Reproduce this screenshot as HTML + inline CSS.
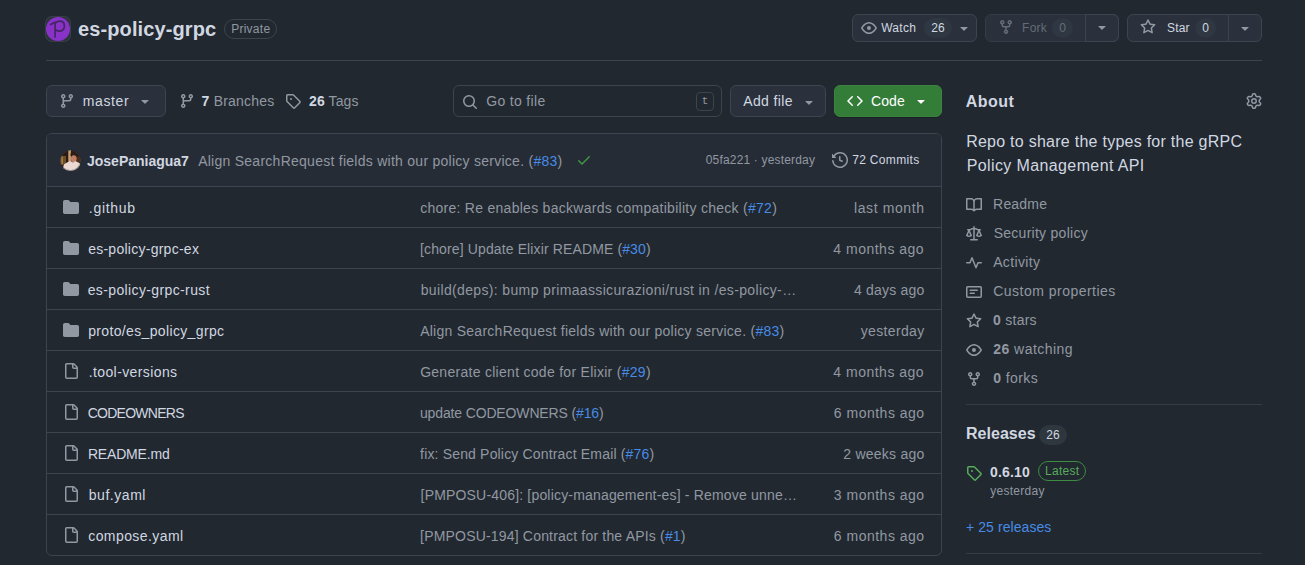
<!DOCTYPE html>
<html lang="en">
<head>
<meta charset="utf-8">
<title>es-policy-grpc</title>
<style>
*{box-sizing:border-box}
html,body{margin:0;padding:0}
body{width:1305px;height:565px;overflow:hidden;background:#212830;color:#d1d7e0;font-family:"Liberation Sans", sans-serif;font-size:14px;line-height:21px;position:relative}
svg{display:block;fill:currentColor;flex:none}
a{color:inherit;text-decoration:none}
.t{white-space:nowrap;display:inline-block}
.abs{position:absolute}
.muted{color:#9198a1}
.link{color:#478be6}
b,.b{font-weight:700}

/* header */
#avatar{left:46px;top:17px;width:24px;height:24px;border-radius:6px;background:#2d333b;box-shadow:0 0 0 1px #373e47;overflow:hidden}
#title{left:78px;top:14px;font-size:20px;line-height:30px;font-weight:700;color:#d1d7e0}
#private{left:224px;top:19px;height:20px;border:1px solid #3d444d;border-radius:10px;padding:0 6px;font-size:12px;line-height:18px;font-weight:400;color:#9198a1}
#hline{left:46px;top:60px;width:1216px;height:1px;background:#3d444d}

.btn{position:absolute;display:flex;align-items:center;background:#2a313c;border:1px solid #3d444d;border-radius:6px;color:#d1d7e0;font-weight:400}
.btn.sm{height:28px;top:14px;font-size:12px;line-height:20px}
.btn.md{height:32px;top:85px;font-size:14px;line-height:20px}
.btn.dis{background:#2a313c;border-color:#343b45;color:#656c76}
.counter{display:inline-block;min-width:20px;height:20px;padding:0 6px;border-radius:10px;background:#656c7633;font-size:12px;line-height:20px;font-weight:400;text-align:center;color:#d1d7e0}
.btn .counter{background:#2f3742}
.btn.dis .counter{color:#656c76;background:#2f3742}
.sep{position:absolute;top:0;bottom:0;width:1px;background:#3d444d}

.kbd{width:18px;height:19px;border:1px solid #3d444d;border-radius:4px;font-family:"Liberation Mono", monospace;font-size:11px;line-height:16px;text-align:center;color:#9198a1}
/* table */
#table{left:46px;top:133px;width:896px;border:1px solid #3d444d;border-radius:6px;overflow:hidden}
#thead{height:52px;background:#262c36;position:relative}
.row{height:41px;border-top:1px solid #3d444d;position:relative}
.row .ic{position:absolute;left:16px;top:12px;color:#9198a1}
.row .nm{position:absolute;left:41px;top:11px;line-height:20px;color:#d1d7e0}
.row .msg{position:absolute;left:373px;top:11px;line-height:20px;color:#9198a1}
.row .dt{position:absolute;right:16.6px;top:11px;line-height:20px;color:#9198a1}

/* sidebar */
.side{position:absolute;left:966px}
.srow{position:absolute;left:966px;display:flex;align-items:center;color:#9198a1;line-height:21px}
.srow svg{margin-right:11px;align-self:flex-start;margin-top:4px}
.srow b{color:inherit}
</style>
</head>
<body>

<!-- repo header -->
<div id="avatar" class="abs"><svg width="24" height="24" viewBox="0 0 24 24"><circle cx="12" cy="12" r="12" fill="#8832c8"/><path d="M4.6 7.6 9.1 5.200V20M9.100 6.400C10.200 4.800 12.200 3.900 14.200 4.100c2.800.300 4.300 2.500 4.200 5.100-.100 3-2.200 5.100-5 5-1.600-.100-3.200-.600-4.300-1.400" fill="none" stroke="#452662" stroke-width="1.700" stroke-linecap="round" stroke-linejoin="round"/></svg></div>
<div id="title" class="abs t" style="letter-spacing:0.103px;margin-left:0.05px;margin-right:-0.05px">es-policy-grpc</div>
<div id="private" class="abs t" style="letter-spacing:0.270px;margin-left:0.14px;margin-right:-0.14px">Private</div>
<div id="hline" class="abs"></div>

<!-- watch / fork / star -->
<div class="btn sm" style="left:852px;width:125px">
  <svg class="abs" style="left:8px;top:5px;color:#9198a1" width="16" height="16" viewBox="0 0 16 16"><path d="M8 2c1.981 0 3.671.992 4.933 2.078 1.27 1.091 2.187 2.345 2.637 3.023a1.62 1.62 0 0 1 0 1.798c-.45.678-1.367 1.932-2.637 3.023C11.67 13.008 9.981 14 8 14c-1.981 0-3.671-.992-4.933-2.078C1.797 10.830.880 9.576.430 8.898a1.620 1.620 0 0 1 0-1.798c.450-.677 1.367-1.931 2.637-3.022C4.330 2.992 6.019 2 8 2ZM1.679 7.932a.120.120 0 0 0 0 .136c.411.622 1.241 1.750 2.366 2.717C5.176 11.758 6.527 12.500 8 12.500c1.473 0 2.825-.742 3.955-1.715 1.124-.967 1.954-2.096 2.366-2.717a.120.120 0 0 0 0-.136c-.412-.621-1.242-1.750-2.366-2.717C10.824 4.242 9.473 3.500 8 3.500c-1.473 0-2.825.742-3.955 1.715-1.124.967-1.954 2.096-2.366 2.717ZM8 10a2 2 0 1 1-.001-3.999A2 2 0 0 1 8 10Z"/></svg>
  <span class="t abs" style="letter-spacing:0.322px;margin-left:0.16px;margin-right:-0.16px;left:28px;top:3px">Watch</span>
  <span class="counter abs" style="left:71px;top:3px;width:28px"><span class="t" style="letter-spacing:0.188px;margin-left:0.09px;margin-right:-0.09px">26</span></span>
  <svg class="abs" style="left:103px;top:5px;color:#9198a1" width="16" height="16" viewBox="0 0 16 16"><path d="m4.427 7.427 3.396 3.396a.25.25 0 0 0 .354 0l3.396-3.396A.25.25 0 0 0 11.396 7H4.604a.25.25 0 0 0-.177.427Z"/></svg>
</div>

<div class="btn sm dis" style="left:985px;width:134px">
  <svg class="abs" style="left:12px;top:4px" width="16" height="16" viewBox="0 0 16 16"><path d="M5 5.372v.878c0 .414.336.75.75.75h4.5a.75.75 0 0 0 .75-.75v-.878a2.25 2.25 0 1 1 1.5 0v.878a2.25 2.25 0 0 1-2.25 2.25h-1.5v2.128a2.251 2.251 0 1 1-1.5 0V8.5h-1.5A2.25 2.25 0 0 1 3.5 6.25v-.878a2.25 2.25 0 1 1 1.5 0ZM5 3.25a.75.75 0 1 0-1.5 0 .75.75 0 0 0 1.5 0Zm6.75.75a.75.75 0 1 0 0-1.5.75.75 0 0 0 0 1.500Zm-3 8.750a.750.750 0 1 0-1.500 0 .750.750 0 0 0 1.500 0Z"/></svg>
  <span class="t abs" style="letter-spacing:0.215px;margin-left:0.11px;margin-right:-0.11px;left:36px;top:3px">Fork</span>
  <span class="counter abs" style="left:66px;top:3px;width:21px"><span class="t" style="letter-spacing:0.188px;margin-left:0.09px;margin-right:-0.09px">0</span></span>
  <div class="abs" style="left:99px;top:-1px;bottom:-1px;right:-1px;border:1px solid #3d444d;border-radius:0 6px 6px 0"></div>
  <svg class="abs" style="left:108px;top:4px;color:#9198a1" width="16" height="16" viewBox="0 0 16 16"><path d="m4.427 7.427 3.396 3.396a.25.25 0 0 0 .354 0l3.396-3.396A.25.25 0 0 0 11.396 7H4.604a.25.25 0 0 0-.177.427Z"/></svg>
</div>

<div class="btn sm" style="left:1127px;width:135px">
  <svg class="abs" style="left:12.3px;top:4px;color:#9198a1" width="16" height="16" viewBox="0 0 16 16"><path d="M8 .25a.75.75 0 0 1 .673.418l1.882 3.815 4.21.612a.75.75 0 0 1 .416 1.279l-3.046 2.97.719 4.192a.751.751 0 0 1-1.088.791L8 12.347l-3.766 1.98a.75.75 0 0 1-1.088-.79l.72-4.194L.818 6.374a.75.75 0 0 1 .416-1.28l4.21-.611L7.327.668A.75.75 0 0 1 8 .25Zm0 2.445L6.615 5.5a.75.75 0 0 1-.564.41l-3.097.45 2.24 2.184a.75.75 0 0 1 .216.664l-.528 3.084 2.769-1.456a.75.75 0 0 1 .698 0l2.77 1.456-.53-3.084a.75.75 0 0 1 .216-.664l2.24-2.183-3.096-.45a.75.75 0 0 1-.564-.41L8 2.694Z"/></svg>
  <span class="t abs" style="letter-spacing:0.148px;margin-left:0.07px;margin-right:-0.07px;left:39px;top:3px">Star</span>
  <span class="counter abs" style="left:67px;top:3px;width:21px"><span class="t" style="letter-spacing:0.188px;margin-left:0.09px;margin-right:-0.09px">0</span></span>
  <div class="sep" style="left:100px"></div>
  <svg class="abs" style="left:109px;top:5px;color:#9198a1" width="16" height="16" viewBox="0 0 16 16"><path d="m4.427 7.427 3.396 3.396a.25.25 0 0 0 .354 0l3.396-3.396A.25.25 0 0 0 11.396 7H4.604a.25.25 0 0 0-.177.427Z"/></svg>
</div>

<!-- toolbar -->
<div class="btn md" style="left:46px;width:120px">
  <svg class="abs" style="left:12.2px;top:7px;color:#9198a1" width="16" height="16" viewBox="0 0 16 16"><path d="M9.5 3.25a2.25 2.25 0 1 1 3 2.122V6A2.5 2.5 0 0 1 10 8.5H6a1 1 0 0 0-1 1v1.128a2.251 2.251 0 1 1-1.5 0V5.372a2.25 2.25 0 1 1 1.5 0v1.836A2.493 2.493 0 0 1 6 7h4a1 1 0 0 0 1-1v-.628A2.25 2.25 0 0 1 9.5 3.25Zm-6 0a.75.75 0 1 0 1.5 0 .75.75 0 0 0-1.5 0Zm8.25-.75a.75.75 0 1 0 0 1.5.75.75 0 0 0 0-1.5ZM4.25 12a.75.75 0 1 0 0 1.5.75.75 0 0 0 0-1.5Z"/></svg>
  <span class="t abs" style="letter-spacing:0.599px;margin-left:0.30px;margin-right:-0.30px;left:35.5px;top:5px;font-weight:400">master</span>
  <svg class="abs" style="left:90px;top:7px;color:#9198a1" width="16" height="16" viewBox="0 0 16 16"><path d="m4.427 7.427 3.396 3.396a.25.25 0 0 0 .354 0l3.396-3.396A.25.25 0 0 0 11.396 7H4.604a.25.25 0 0 0-.177.427Z"/></svg>
</div>

<svg class="abs" style="left:179px;top:93px;color:#9198a1" width="16" height="16" viewBox="0 0 16 16"><path d="M9.5 3.25a2.25 2.25 0 1 1 3 2.122V6A2.5 2.5 0 0 1 10 8.5H6a1 1 0 0 0-1 1v1.128a2.251 2.251 0 1 1-1.5 0V5.372a2.25 2.25 0 1 1 1.5 0v1.836A2.493 2.493 0 0 1 6 7h4a1 1 0 0 0 1-1v-.628A2.25 2.25 0 0 1 9.5 3.25Zm-6 0a.75.75 0 1 0 1.5 0 .75.75 0 0 0-1.5 0Zm8.25-.75a.75.75 0 1 0 0 1.5.75.75 0 0 0 0-1.5ZM4.25 12a.75.75 0 1 0 0 1.5.75.75 0 0 0 0-1.5Z"/></svg>
<span class="t abs muted" style="letter-spacing:0.191px;margin-left:-0.40px;margin-right:0.40px;margin-top:1px;left:202px;top:90px"><b style="color:#d1d7e0">7</b> Branches</span>
<svg class="abs" style="left:285px;top:93px;color:#9198a1" width="16" height="16" viewBox="0 0 16 16"><path d="M1 7.775V2.75C1 1.784 1.784 1 2.75 1h5.025c.464 0 .91.184 1.238.513l6.25 6.25a1.75 1.75 0 0 1 0 2.474l-5.026 5.026a1.75 1.75 0 0 1-2.474 0l-6.25-6.25A1.752 1.752 0 0 1 1 7.775Zm1.5 0c0 .066.026.13.073.177l6.25 6.25a.25.25 0 0 0 .354 0l5.025-5.025a.25.25 0 0 0 0-.354l-6.25-6.25a.25.25 0 0 0-.177-.073H2.75a.25.25 0 0 0-.25.25ZM6 5a1 1 0 1 1 0 2 1 1 0 0 1 0-2Z"/></svg>
<span class="t abs muted" style="letter-spacing:0.103px;margin-left:0.05px;margin-right:-0.05px;margin-top:1px;left:309px;top:90px"><b style="color:#d1d7e0">26</b> Tags</span>

<div class="abs" style="left:453px;top:85px;width:269px;height:32px;border:1px solid #3d444d;border-radius:6px;background:#212830">
  <svg class="abs" style="left:8px;top:8px;color:#9198a1" width="16" height="16" viewBox="0 0 16 16"><path d="M10.68 11.74a6 6 0 0 1-7.922-8.982 6 6 0 0 1 8.982 7.922l3.04 3.04a.749.749 0 0 1-.326 1.275.749.749 0 0 1-.734-.215ZM11.5 7a4.499 4.499 0 1 0-8.997 0A4.499 4.499 0 0 0 11.500 7Z"/></svg>
  <span class="t abs muted" style="letter-spacing:0.338px;margin-left:0.17px;margin-right:-0.17px;margin-top:1px;left:32px;top:4px">Go to file</span>
  <span class="abs kbd" style="left:242px;top:6px">t</span>
</div>

<div class="btn md" style="left:730px;width:96px">
  <span class="t abs" style="letter-spacing:0.381px;margin-left:0.19px;margin-right:-0.19px;left:12px;top:5px">Add file</span>
  <svg class="abs" style="left:70px;top:8px;color:#9198a1" width="16" height="16" viewBox="0 0 16 16"><path d="m4.427 7.427 3.396 3.396a.25.25 0 0 0 .354 0l3.396-3.396A.25.25 0 0 0 11.396 7H4.604a.25.25 0 0 0-.177.427Z"/></svg>
</div>

<div class="btn md" style="left:834px;width:108px;background:#347d39;border-color:#3a843f;box-shadow:0 1px 0 rgba(20,24,30,.55);color:#fff">
  <svg class="abs" style="left:12px;top:7px" width="16" height="16" viewBox="0 0 16 16"><path d="m11.28 3.22 4.25 4.25a.75.75 0 0 1 0 1.06l-4.25 4.25a.749.749 0 0 1-1.275-.326.749.749 0 0 1 .215-.734L13.94 8l-3.72-3.72a.749.749 0 0 1 .326-1.275.749.749 0 0 1 .734.215Zm-6.56 0a.751.751 0 0 1 1.042.018.751.751 0 0 1 .018 1.042L2.06 8l3.72 3.72a.749.749 0 0 1-.326 1.275.749.749 0 0 1-.734-.215L.47 8.53a.75.75 0 0 1 0-1.06Z"/></svg>
  <span class="t abs" style="letter-spacing:0.090px;margin-left:0.04px;margin-right:-0.04px;left:36px;top:5px">Code</span>
  <svg class="abs" style="left:78px;top:7px" width="16" height="16" viewBox="0 0 16 16"><path d="m4.427 7.427 3.396 3.396a.25.25 0 0 0 .354 0l3.396-3.396A.25.25 0 0 0 11.396 7H4.604a.25.25 0 0 0-.177.427Z"/></svg>
</div>

<!-- file table -->
<div id="table" class="abs">
  <div id="thead">
    <div class="abs" style="left:12.600px;top:16px;width:21px;height:21px;border-radius:50%;overflow:hidden;background:#2a1b13"><svg width="21" height="21" viewBox="-0.500 -0.500 21 21"><g style="filter:blur(.7px)"><rect x="-1" y="5.500" width="6.500" height="8.500" fill="#6e4c28"/><rect x="1" y="6" width="1.200" height="8" fill="#b8904a"/><rect x="7.800" y="-2" width="2.600" height="13" fill="#c9a274"/><rect x="16.500" y="6" width="5" height="6" fill="#4a2e1a"/><ellipse cx="13.600" cy="4" rx="3.600" ry="2.900" fill="#2c1e17"/><ellipse cx="13.300" cy="8.200" rx="2.900" ry="3.500" fill="#c07f66"/><path d="M2.500 21 4 14.500 9.500 11.200 12.500 13 15 11.400 19 13.500 20.500 21Z" fill="#ecd9d2" stroke="#ecd9d2" stroke-width="1.500" stroke-linejoin="round"/></g><circle cx="10" cy="10" r="10.100" fill="none" stroke="#444c56" stroke-opacity=".7" stroke-width=".8"/></svg></div>
    <span class="t abs b" style="letter-spacing:-0.005px;margin-left:-1.00px;margin-right:1.00px;left:41px;top:17px;line-height:20px">JosePaniagua7</span>
    <span class="t abs muted" style="letter-spacing:0.262px;margin-left:0.13px;margin-right:-0.13px;left:151px;top:17px;line-height:20px">Align SearchRequest fields with our policy service. (<span class="link">#83</span>)</span>
    <svg class="abs" style="left:529px;top:18px;color:#3f9645" width="16" height="16" viewBox="0 0 16 16"><path d="M13.78 4.22a.75.75 0 0 1 0 1.06l-7.25 7.25a.75.75 0 0 1-1.06 0L2.22 9.28a.751.751 0 0 1 .018-1.042.751.751 0 0 1 1.042-.018L6 10.94l6.72-6.72a.75.75 0 0 1 1.06 0Z"/></svg>
    <span class="t abs muted" style="letter-spacing:0.171px;margin-left:0.09px;margin-right:-0.09px;right:126px;top:16px;font-size:12px;line-height:20px">05fa221 · yesterday</span>
    <svg class="abs" style="left:785px;top:18px;color:#9198a1" width="16" height="16" viewBox="0 0 16 16"><path d="m.427 1.927 1.215 1.215a8.002 8.002 0 1 1-1.6 5.685.75.75 0 1 1 1.493-.154 6.5 6.5 0 1 0 1.18-4.458l1.358 1.358A.25.25 0 0 1 3.896 6H.25A.25.25 0 0 1 0 5.75V2.104a.25.25 0 0 1 .427-.177ZM7.75 4a.75.75 0 0 1 .75.75v2.992l2.028.812a.75.75 0 0 1-.557 1.392l-2.5-1A.751.751 0 0 1 7 8.25v-3.5A.75.75 0 0 1 7.75 4Z"/></svg>
    <span class="t abs" style="letter-spacing:0.330px;margin-left:0.16px;margin-right:-0.16px;left:805px;top:16px;font-size:12px;line-height:20px;font-weight:400">72 Commits</span>
  </div>
  <div class="row"><svg class="ic" width="16" height="16" viewBox="0 0 16 16"><path d="M1.75 1A1.75 1.75 0 0 0 0 2.75v10.5C0 14.216.784 15 1.75 15h12.5A1.75 1.75 0 0 0 16 13.25v-8.5A1.75 1.75 0 0 0 14.25 3H7.5a.25.25 0 0 1-.2-.1l-.9-1.2C6.07 1.26 5.55 1 5 1H1.750Z"/></svg><span class="t nm" style="letter-spacing:0.701px;margin-left:0.85px;margin-right:-0.85px">.github</span><span class="t msg" style="letter-spacing:0.275px;margin-left:0.14px;margin-right:-0.14px">chore: Re enables backwards compatibility check (<span class="link">#72</span>)</span><span class="t dt" style="letter-spacing:0.620px;margin-left:0.31px;margin-right:-0.31px">last month</span></div>
  <div class="row"><svg class="ic" width="16" height="16" viewBox="0 0 16 16"><path d="M1.75 1A1.75 1.75 0 0 0 0 2.75v10.5C0 14.216.784 15 1.75 15h12.5A1.75 1.75 0 0 0 16 13.25v-8.5A1.75 1.75 0 0 0 14.25 3H7.5a.25.25 0 0 1-.2-.1l-.9-1.2C6.07 1.26 5.55 1 5 1H1.750Z"/></svg><span class="t nm" style="letter-spacing:0.262px;margin-left:0.13px;margin-right:-0.13px">es-policy-grpc-ex</span><span class="t msg" style="letter-spacing:0.125px;margin-left:0.06px;margin-right:-0.06px">[chore] Update Elixir README (<span class="link">#30</span>)</span><span class="t dt" style="letter-spacing:0.501px;margin-left:-0.25px;margin-right:0.25px">4 months ago</span></div>
  <div class="row"><svg class="ic" width="16" height="16" viewBox="0 0 16 16"><path d="M1.75 1A1.75 1.75 0 0 0 0 2.75v10.5C0 14.216.784 15 1.75 15h12.5A1.75 1.75 0 0 0 16 13.25v-8.5A1.75 1.75 0 0 0 14.25 3H7.5a.25.25 0 0 1-.2-.1l-.9-1.2C6.07 1.26 5.55 1 5 1H1.750Z"/></svg><span class="t nm" style="letter-spacing:0.373px;margin-left:-0.31px;margin-right:0.31px">es-policy-grpc-rust</span><span class="t msg" style="letter-spacing:0.355px;margin-left:0.68px;margin-right:-0.68px">build(deps): bump primaassicurazioni/rust in /es-policy-…</span><span class="t dt" style="letter-spacing:0.205px;margin-left:0.10px;margin-right:-0.10px">4 days ago</span></div>
  <div class="row"><svg class="ic" width="16" height="16" viewBox="0 0 16 16"><path d="M1.75 1A1.75 1.75 0 0 0 0 2.75v10.5C0 14.216.784 15 1.75 15h12.5A1.75 1.75 0 0 0 16 13.25v-8.5A1.75 1.75 0 0 0 14.25 3H7.5a.25.25 0 0 1-.2-.1l-.9-1.2C6.07 1.26 5.55 1 5 1H1.750Z"/></svg><span class="t nm" style="letter-spacing:0.352px;margin-left:0.18px;margin-right:-0.18px">proto/es_policy_grpc</span><span class="t msg" style="letter-spacing:0.262px;margin-left:0.13px;margin-right:-0.13px">Align SearchRequest fields with our policy service. (<span class="link">#83</span>)</span><span class="t dt" style="letter-spacing:0.345px;margin-left:0.17px;margin-right:-0.17px">yesterday</span></div>
  <div class="row"><svg class="ic" width="16" height="16" viewBox="0 0 16 16"><path d="M2 1.75C2 .784 2.784 0 3.75 0h6.586c.464 0 .909.184 1.237.513l2.914 2.914c.329.328.513.773.513 1.237v9.586A1.75 1.75 0 0 1 13.25 16h-9.500A1.750 1.750 0 0 1 2 14.250Zm1.750-.250a.250.250 0 0 0-.250.250v12.500c0 .138.112.250.250.250h9.500a.250.250 0 0 0 .250-.250V6h-2.750A1.750 1.750 0 0 1 9 4.250V1.500Zm6.750.062V4.250c0 .138.112.250.250.250h2.688l-.011-.013-2.914-2.914-.013-.011Z"/></svg><span class="t nm" style="letter-spacing:0.396px;margin-left:0.70px;margin-right:-0.70px">.tool-versions</span><span class="t msg" style="letter-spacing:0.284px;margin-left:0.14px;margin-right:-0.14px">Generate client code for Elixir (<span class="link">#29</span>)</span><span class="t dt" style="letter-spacing:0.501px;margin-left:-0.25px;margin-right:0.25px">4 months ago</span></div>
  <div class="row"><svg class="ic" width="16" height="16" viewBox="0 0 16 16"><path d="M2 1.75C2 .784 2.784 0 3.75 0h6.586c.464 0 .909.184 1.237.513l2.914 2.914c.329.328.513.773.513 1.237v9.586A1.75 1.75 0 0 1 13.25 16h-9.500A1.750 1.750 0 0 1 2 14.250Zm1.750-.250a.250.250 0 0 0-.250.250v12.500c0 .138.112.250.250.250h9.500a.250.250 0 0 0 .250-.250V6h-2.750A1.750 1.750 0 0 1 9 4.250V1.500Zm6.750.062V4.250c0 .138.112.250.250.250h2.688l-.011-.013-2.914-2.914-.013-.011Z"/></svg><span class="t nm" style="letter-spacing:-0.731px;margin-left:-0.37px;margin-right:0.37px">CODEOWNERS</span><span class="t msg" style="letter-spacing:-0.139px;margin-left:-0.07px;margin-right:0.07px">update CODEOWNERS (<span class="link">#16</span>)</span><span class="t dt" style="letter-spacing:0.501px;margin-left:0.25px;margin-right:-0.25px">6 months ago</span></div>
  <div class="row"><svg class="ic" width="16" height="16" viewBox="0 0 16 16"><path d="M2 1.75C2 .784 2.784 0 3.75 0h6.586c.464 0 .909.184 1.237.513l2.914 2.914c.329.328.513.773.513 1.237v9.586A1.75 1.75 0 0 1 13.25 16h-9.500A1.750 1.750 0 0 1 2 14.250Zm1.750-.250a.250.250 0 0 0-.250.250v12.500c0 .138.112.250.250.250h9.500a.250.250 0 0 0 .250-.250V6h-2.750A1.750 1.750 0 0 1 9 4.250V1.500Zm6.750.062V4.250c0 .138.112.250.250.250h2.688l-.011-.013-2.914-2.914-.013-.011Z"/></svg><span class="t nm" style="letter-spacing:-0.182px;margin-left:-0.09px;margin-right:0.09px">README.md</span><span class="t msg" style="letter-spacing:0.168px;margin-left:0.08px;margin-right:-0.08px">fix: Send Policy Contract Email (<span class="link">#76</span>)</span><span class="t dt" style="letter-spacing:0.236px;margin-left:0.12px;margin-right:-0.12px">2 weeks ago</span></div>
  <div class="row"><svg class="ic" width="16" height="16" viewBox="0 0 16 16"><path d="M2 1.75C2 .784 2.784 0 3.75 0h6.586c.464 0 .909.184 1.237.513l2.914 2.914c.329.328.513.773.513 1.237v9.586A1.75 1.75 0 0 1 13.25 16h-9.500A1.750 1.750 0 0 1 2 14.250Zm1.750-.250a.250.250 0 0 0-.250.250v12.500c0 .138.112.250.250.250h9.500a.250.250 0 0 0 .250-.250V6h-2.750A1.750 1.750 0 0 1 9 4.250V1.500Zm6.750.062V4.250c0 .138.112.250.250.250h2.688l-.011-.013-2.914-2.914-.013-.011Z"/></svg><span class="t nm" style="letter-spacing:0.541px;margin-left:0.77px;margin-right:-0.77px">buf.yaml</span><span class="t msg" style="letter-spacing:0.181px;margin-left:0.59px;margin-right:-0.59px">[PMPOSU-406]: [policy-management-es] - Remove unne…</span><span class="t dt" style="letter-spacing:0.501px;margin-left:0.25px;margin-right:-0.25px">3 months ago</span></div>
  <div class="row"><svg class="ic" width="16" height="16" viewBox="0 0 16 16"><path d="M2 1.75C2 .784 2.784 0 3.75 0h6.586c.464 0 .909.184 1.237.513l2.914 2.914c.329.328.513.773.513 1.237v9.586A1.75 1.75 0 0 1 13.25 16h-9.500A1.750 1.750 0 0 1 2 14.250Zm1.750-.250a.250.250 0 0 0-.250.250v12.500c0 .138.112.250.250.250h9.500a.250.250 0 0 0 .250-.250V6h-2.750A1.750 1.750 0 0 1 9 4.250V1.500Zm6.750.062V4.250c0 .138.112.250.250.250h2.688l-.011-.013-2.914-2.914-.013-.011Z"/></svg><span class="t nm" style="letter-spacing:0.430px;margin-left:0.21px;margin-right:-0.21px">compose.yaml</span><span class="t msg" style="letter-spacing:0.186px;margin-left:0.09px;margin-right:-0.09px">[PMPOSU-194] Contract for the APIs (<span class="link">#1</span>)</span><span class="t dt" style="letter-spacing:0.501px;margin-left:0.25px;margin-right:-0.25px">6 months ago</span></div>
</div>

<!-- sidebar -->
<div class="side t" style="letter-spacing:0.466px;margin-left:-0.27px;margin-right:0.27px;margin-top:1px;top:89px;font-size:16px;line-height:24px;font-weight:700">About</div>
<svg class="abs" style="left:1246px;top:93px;color:#9198a1" width="16" height="16" viewBox="0 0 16 16"><path d="M8 0a8.2 8.2 0 0 1 .701.031C9.444.095 9.990.645 10.160 1.290l.288 1.107c.018.066.079.158.212.224.231.114.454.243.668.386.123.082.233.090.299.071l1.103-.303c.644-.176 1.392.021 1.820.630.270.385.506.792.704 1.218.315.675.111 1.422-.364 1.891l-.814.806c-.049.048-.098.147-.088.294.016.257.016.515 0 .772-.010.147.038.246.088.294l.814.806c.475.469.679 1.216.364 1.891a7.977 7.977 0 0 1-.704 1.217c-.428.610-1.176.807-1.820.630l-1.102-.302c-.067-.019-.177-.011-.300.071a5.909 5.909 0 0 1-.668.386c-.133.066-.194.158-.211.224l-.290 1.106c-.168.646-.715 1.196-1.458 1.260a8.006 8.006 0 0 1-1.402 0c-.743-.064-1.289-.614-1.458-1.260l-.289-1.106c-.018-.066-.079-.158-.212-.224a5.738 5.738 0 0 1-.668-.386c-.123-.082-.233-.090-.299-.071l-1.103.303c-.644.176-1.392-.021-1.820-.630a8.120 8.120 0 0 1-.704-1.218c-.315-.675-.111-1.422.363-1.891l.815-.806c.050-.048.098-.147.088-.294a6.214 6.214 0 0 1 0-.772c.010-.147-.038-.246-.088-.294l-.815-.806C.635 6.045.431 5.298.746 4.623a7.920 7.920 0 0 1 .704-1.217c.428-.610 1.176-.807 1.820-.630l1.102.302c.067.019.177.011.300-.071.214-.143.437-.272.668-.386.133-.066.194-.158.211-.224l.290-1.106C6.009.645 6.556.095 7.299.030 7.530.010 7.764 0 8 0Zm-.571 1.525c-.036.003-.108.036-.137.146l-.289 1.105c-.147.561-.549.967-.998 1.189-.173.086-.340.183-.500.290-.417.278-.970.423-1.529.270l-1.103-.303c-.109-.030-.175.016-.195.045-.220.312-.412.644-.573.990-.014.031-.021.110.059.190l.815.806c.411.406.562.957.530 1.456a4.709 4.709 0 0 0 0 .582c.032.499-.119 1.050-.530 1.456l-.815.806c-.081.080-.073.159-.059.190.162.346.353.677.573.989.020.030.085.076.195.046l1.102-.303c.560-.153 1.113-.008 1.530.270.161.107.328.204.501.290.447.222.850.629.997 1.189l.289 1.105c.029.109.101.143.137.146a6.600 6.600 0 0 0 1.142 0c.036-.003.108-.036.137-.146l.289-1.105c.147-.561.549-.967.998-1.189.173-.086.340-.183.500-.290.417-.278.970-.423 1.529-.270l1.103.303c.109.029.175-.016.195-.045.220-.313.411-.644.573-.990.014-.031.021-.110-.059-.190l-.815-.806c-.411-.406-.562-.957-.530-1.456a4.709 4.709 0 0 0 0-.582c-.032-.499.119-1.050.530-1.456l.815-.806c.081-.080.073-.159.059-.190a6.464 6.464 0 0 0-.573-.989c-.020-.030-.085-.076-.195-.046l-1.102.303c-.560.153-1.113.008-1.530-.270a4.440 4.440 0 0 0-.501-.290c-.447-.222-.850-.629-.997-1.189l-.289-1.105c-.029-.110-.101-.143-.137-.146a6.600 6.600 0 0 0-1.142 0ZM11 8a3 3 0 1 1-6 0 3 3 0 0 1 6 0ZM9.500 8a1.500 1.500 0 1 0-3.001.001A1.500 1.500 0 0 0 9.500 8Z"/></svg>

<div class="side t" style="letter-spacing:0.259px;margin-left:0.13px;margin-right:-0.13px;margin-top:1px;top:129px;font-size:16px;line-height:24px">Repo to share the types for the gRPC</div>
<div class="side t" style="letter-spacing:0.385px;margin-left:0.69px;margin-right:-0.69px;margin-top:1px;top:153px;font-size:16px;line-height:24px">Policy Management API</div>

<div class="srow" style="top:193px"><svg width="16" height="16" viewBox="0 0 16 16"><path d="M0 1.75A.75.75 0 0 1 .75 1h4.253c1.227 0 2.317.59 3 1.501A3.743 3.743 0 0 1 11.006 1h4.245a.75.75 0 0 1 .75.75v10.5a.75.75 0 0 1-.75.75h-4.507a2.25 2.25 0 0 0-1.591.659l-.622.621a.75.75 0 0 1-1.06 0l-.622-.621A2.25 2.25 0 0 0 5.258 13H.75a.75.75 0 0 1-.75-.75Zm7.251 10.324.004-5.073-.002-2.253A2.25 2.25 0 0 0 5.003 2.5H1.5v9h3.757a3.75 3.75 0 0 1 1.994.574ZM8.755 4.75l-.004 7.322a3.752 3.752 0 0 1 1.992-.572H14.5v-9h-3.495a2.25 2.25 0 0 0-2.25 2.25Z"/></svg><span class="t" style="letter-spacing:0.190px;margin-left:0.10px;margin-right:-0.10px;position:relative;top:1px">Readme</span></div>
<div class="srow" style="top:222px"><svg width="16" height="16" viewBox="0 0 16 16"><path d="M8.75.75V2h.985c.304 0 .603.08.867.231l1.29.736c.038.022.08.033.124.033h2.234a.75.75 0 0 1 0 1.5h-.427l2.111 4.692a.75.75 0 0 1-.154.838l-.53-.53.529.531-.001.002-.002.002-.006.006-.006.005-.01.01-.045.04c-.21.176-.441.327-.686.45C14.556 10.78 13.88 11 13 11a4.498 4.498 0 0 1-2.023-.454 3.544 3.544 0 0 1-.686-.45l-.045-.04-.016-.015-.006-.006-.004-.004v-.001a.75.75 0 0 1-.154-.838L12.178 4.500h-.162c-.305 0-.604-.079-.868-.231l-1.290-.736a.245.245 0 0 0-.124-.033H8.750V13h2.500a.750.750 0 0 1 0 1.500h-6.500a.750.750 0 0 1 0-1.500h2.500V3.500h-.984a.245.245 0 0 0-.124.033l-1.289.737c-.265.150-.564.230-.869.230h-.162l2.112 4.692a.750.750 0 0 1-.154.838l-.530-.530.529.531-.001.002-.002.002-.006.006-.016.015-.045.040c-.210.176-.441.327-.686.450C4.556 10.780 3.880 11 3 11a4.498 4.498 0 0 1-2.023-.454 3.544 3.544 0 0 1-.686-.450l-.045-.040-.016-.015-.006-.006-.004-.004v-.001a.750.750 0 0 1-.154-.838L2.178 4.500H1.750a.750.750 0 0 1 0-1.500h2.234a.249.249 0 0 0 .125-.033l1.288-.737c.265-.150.564-.230.869-.230h.984V.750a.750.750 0 0 1 1.500 0Zm2.945 8.477c.285.135.718.273 1.305.273s1.020-.138 1.305-.273L13 6.327Zm-10 0c.285.135.718.273 1.305.273s1.020-.138 1.305-.273L3 6.327Z"/></svg><span class="t" style="letter-spacing:0.273px;margin-left:0.64px;margin-right:-0.64px;position:relative;top:1px">Security policy</span></div>
<div class="srow" style="top:251px"><svg width="16" height="16" viewBox="0 0 16 16"><path d="M6 2c.306 0 .582.187.696.471L10 10.731l1.304-3.26A.751.751 0 0 1 12 7h3.25a.75.75 0 0 1 0 1.5h-2.742l-1.812 4.528a.751.751 0 0 1-1.392 0L6 4.77 4.696 8.03A.75.75 0 0 1 4 8.5H.75a.75.75 0 0 1 0-1.5h2.742l1.812-4.529A.751.751 0 0 1 6 2Z"/></svg><span class="t" style="letter-spacing:0.363px;margin-left:0.18px;margin-right:-0.18px;position:relative;top:1px">Activity</span></div>
<div class="srow" style="top:280px"><svg width="16" height="16" viewBox="0 0 16 16"><path d="M0 3.75C0 2.784.784 2 1.75 2h12.5c.966 0 1.75.784 1.75 1.75v8.5A1.75 1.75 0 0 1 14.25 14H1.75A1.75 1.75 0 0 1 0 12.25Zm1.75-.25a.25.25 0 0 0-.25.25v8.5c0 .138.112.25.25.25h12.5a.25.25 0 0 0 .25-.25v-8.5a.25.25 0 0 0-.25-.25ZM3.5 6.25a.75.75 0 0 1 .75-.75h7a.75.75 0 0 1 0 1.5h-7a.75.75 0 0 1-.75-.75Zm.75 2.25h4a.75.75 0 0 1 0 1.5h-4a.75.75 0 0 1 0-1.5Z"/></svg><span class="t" style="letter-spacing:0.483px;margin-left:0.24px;margin-right:-0.24px;position:relative;top:1px">Custom properties</span></div>
<div class="srow" style="top:309px"><svg width="16" height="16" viewBox="0 0 16 16"><path d="M8 .25a.75.75 0 0 1 .673.418l1.882 3.815 4.21.612a.75.75 0 0 1 .416 1.279l-3.046 2.97.719 4.192a.751.751 0 0 1-1.088.791L8 12.347l-3.766 1.98a.75.75 0 0 1-1.088-.79l.72-4.194L.818 6.374a.75.75 0 0 1 .416-1.28l4.21-.611L7.327.668A.75.75 0 0 1 8 .25Zm0 2.445L6.615 5.5a.75.75 0 0 1-.564.41l-3.097.45 2.24 2.184a.75.75 0 0 1 .216.664l-.528 3.084 2.769-1.456a.75.75 0 0 1 .698 0l2.77 1.456-.53-3.084a.75.75 0 0 1 .216-.664l2.24-2.183-3.096-.45a.75.75 0 0 1-.564-.41L8 2.694Z"/></svg><span class="t" style="letter-spacing:0.248px;margin-left:0.12px;margin-right:-0.12px;position:relative;top:1px"><b>0</b> stars</span></div>
<div class="srow" style="top:338px"><svg width="16" height="16" viewBox="0 0 16 16"><path d="M8 2c1.981 0 3.671.992 4.933 2.078 1.27 1.091 2.187 2.345 2.637 3.023a1.62 1.62 0 0 1 0 1.798c-.45.678-1.367 1.932-2.637 3.023C11.67 13.008 9.981 14 8 14c-1.981 0-3.671-.992-4.933-2.078C1.797 10.830.880 9.576.430 8.898a1.620 1.620 0 0 1 0-1.798c.450-.677 1.367-1.931 2.637-3.022C4.330 2.992 6.019 2 8 2ZM1.679 7.932a.120.120 0 0 0 0 .136c.411.622 1.241 1.750 2.366 2.717C5.176 11.758 6.527 12.500 8 12.500c1.473 0 2.825-.742 3.955-1.715 1.124-.967 1.954-2.096 2.366-2.717a.120.120 0 0 0 0-.136c-.412-.621-1.242-1.750-2.366-2.717C10.824 4.242 9.473 3.500 8 3.500c-1.473 0-2.825.742-3.955 1.715-1.124.967-1.954 2.096-2.366 2.717ZM8 10a2 2 0 1 1-.001-3.999A2 2 0 0 1 8 10Z"/></svg><span class="t" style="letter-spacing:0.464px;margin-left:0.23px;margin-right:-0.23px;position:relative;top:1px"><b>26</b> watching</span></div>
<div class="srow" style="top:367px"><svg width="16" height="16" viewBox="0 0 16 16"><path d="M5 5.372v.878c0 .414.336.75.75.75h4.5a.75.75 0 0 0 .75-.75v-.878a2.25 2.25 0 1 1 1.5 0v.878a2.25 2.25 0 0 1-2.25 2.25h-1.5v2.128a2.251 2.251 0 1 1-1.5 0V8.5h-1.5A2.25 2.25 0 0 1 3.5 6.25v-.878a2.25 2.25 0 1 1 1.5 0ZM5 3.25a.75.75 0 1 0-1.5 0 .75.75 0 0 0 1.5 0Zm6.75.75a.75.75 0 1 0 0-1.5.75.75 0 0 0 0 1.500Zm-3 8.750a.750.750 0 1 0-1.500 0 .750.750 0 0 0 1.500 0Z"/></svg><span class="t" style="letter-spacing:0.411px;margin-left:0.21px;margin-right:-0.21px;position:relative;top:1px"><b>0</b> forks</span></div>

<div class="abs" style="left:966px;top:404px;width:296px;height:1px;background:#3d444db3"></div>

<div class="side t" style="letter-spacing:0.023px;margin-left:0.01px;margin-right:-0.01px;margin-top:1px;top:421px;font-size:16px;line-height:24px;font-weight:700">Releases</div>
<span class="counter abs" style="left:1039px;top:425px;width:28px"><span class="t" style="letter-spacing:0.188px;margin-left:0.09px;margin-right:-0.09px">26</span></span>

<svg class="abs" style="left:966px;top:465px;color:#57ab5a" width="16" height="16" viewBox="0 0 16 16"><path d="M1 7.775V2.75C1 1.784 1.784 1 2.75 1h5.025c.464 0 .91.184 1.238.513l6.25 6.25a1.75 1.75 0 0 1 0 2.474l-5.026 5.026a1.75 1.75 0 0 1-2.474 0l-6.25-6.25A1.752 1.752 0 0 1 1 7.775Zm1.5 0c0 .066.026.13.073.177l6.25 6.25a.25.25 0 0 0 .354 0l5.025-5.025a.25.25 0 0 0 0-.354l-6.25-6.25a.25.25 0 0 0-.177-.073H2.75a.25.25 0 0 0-.25.25ZM6 5a1 1 0 1 1 0 2 1 1 0 0 1 0-2Z"/></svg>
<span class="t abs b" style="letter-spacing:0.161px;margin-left:0.08px;margin-right:-0.08px;margin-top:1px;left:990px;top:461px">0.6.10</span>
<span class="abs" style="left:1038px;top:461px;height:20px;border:1px solid #3d8c42;border-radius:10px;padding:0 6px;font-size:12px;line-height:18px;font-weight:400;color:#57ab5a"><span class="t" style="letter-spacing:0.250px;margin-left:0.12px;margin-right:-0.12px">Latest</span></span>
<span class="t abs muted" style="letter-spacing:0.295px;margin-left:0.15px;margin-right:-0.15px;left:990px;top:482px;font-size:12px;line-height:18px">yesterday</span>
<span class="t abs link" style="letter-spacing:0.071px;margin-left:0.04px;margin-right:-0.04px;margin-top:1px;left:966px;top:516px">+ 25 releases</span>

<div class="abs" style="left:966px;top:553px;width:296px;height:1px;background:#3d444db3"></div>

</body>
</html>
